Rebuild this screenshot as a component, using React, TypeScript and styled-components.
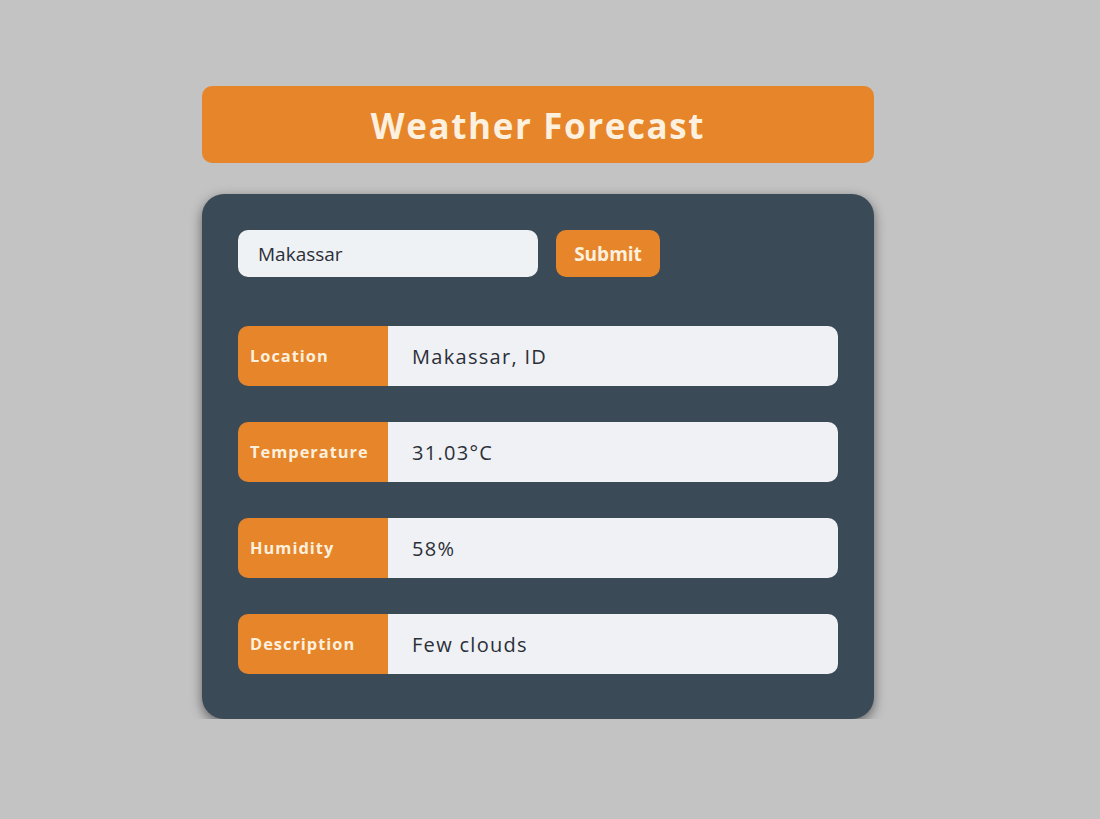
import React from "react";
import styled, { createGlobalStyle } from "styled-components";

const Global = createGlobalStyle`
  html, body { margin: 0; padding: 0; background: #c3c3c3; }
  body { font-family: "Open Sans", "Noto Sans", sans-serif; }
`;

const Page = styled.div`
  width: 672px;
  padding: 86px 0 0 202px;
  display: flex;
  flex-direction: column;
  gap: 31px;
`;

const Header = styled.h1`
  margin: 0;
  height: 77px;
  background: #e6852a;
  border-radius: 10px;
  display: flex;
  align-items: center;
  justify-content: center;
  color: #fdf0de;
  font-family: "Open Sans", sans-serif;
  font-weight: 700;
  font-size: 35px;
  letter-spacing: 1.6px;
  padding-top: 2px;
  box-sizing: border-box;
`;

const Card = styled.div`
  background: #3b4a57;
  border-radius: 22px;
  box-shadow: 0 4px 12px rgba(0, 0, 0, 0.5);
  padding: 36px 36px 45px;
  display: flex;
  flex-direction: column;
`;

const Form = styled.div`
  display: flex;
  gap: 18px;
  margin-bottom: 49px;
`;

const Input = styled.input`
  width: 300px;
  height: 47px;
  box-sizing: border-box;
  border: none;
  border-radius: 10px;
  background: #eff2f5;
  padding: 0 20px;
  font-family: "Open Sans", sans-serif;
  font-size: 19px;
  color: #2b2f38;
  outline: none;
`;

const Button = styled.button`
  width: 104px;
  height: 47px;
  border: none;
  border-radius: 10px;
  background: #e6852a;
  color: #fdf0de;
  font-family: "Open Sans", sans-serif;
  font-weight: 700;
  font-size: 19px;
  padding: 0;
`;

const Rows = styled.div`
  display: flex;
  flex-direction: column;
  gap: 36px;
`;

const Row = styled.div`
  display: flex;
  height: 60px;
  border-radius: 10px;
  overflow: hidden;
`;

const Label = styled.div`
  width: 150px;
  flex-shrink: 0;
  background: #e6852a;
  color: #fdf0de;
  display: flex;
  align-items: center;
  padding-left: 12px;
  box-sizing: border-box;
  font-weight: 700;
  font-size: 16.4px;
  letter-spacing: 1px;
  padding-bottom: 2px;
`;

const Value = styled.div`
  flex: 1;
  background: #eff1f4;
  color: #2b2f38;
  display: flex;
  align-items: center;
  padding-left: 24px;
  font-size: 20px;
  letter-spacing: 1.3px;
`;

const data = [
  ["Location", "Makassar, ID"],
  ["Temperature", "31.03°C"],
  ["Humidity", "58%"],
  ["Description", "Few clouds"],
];

export default function App() {
  return (
    <>
      <Global />
      <Page>
        <Header>Weather Forecast</Header>
        <Card>
          <Form>
            <Input defaultValue="Makassar" />
            <Button>Submit</Button>
          </Form>
          <Rows>
            {data.map(([k, v]) => (
              <Row key={k}>
                <Label>{k}</Label>
                <Value>{v}</Value>
              </Row>
            ))}
          </Rows>
        </Card>
      </Page>
    </>
  );
}
